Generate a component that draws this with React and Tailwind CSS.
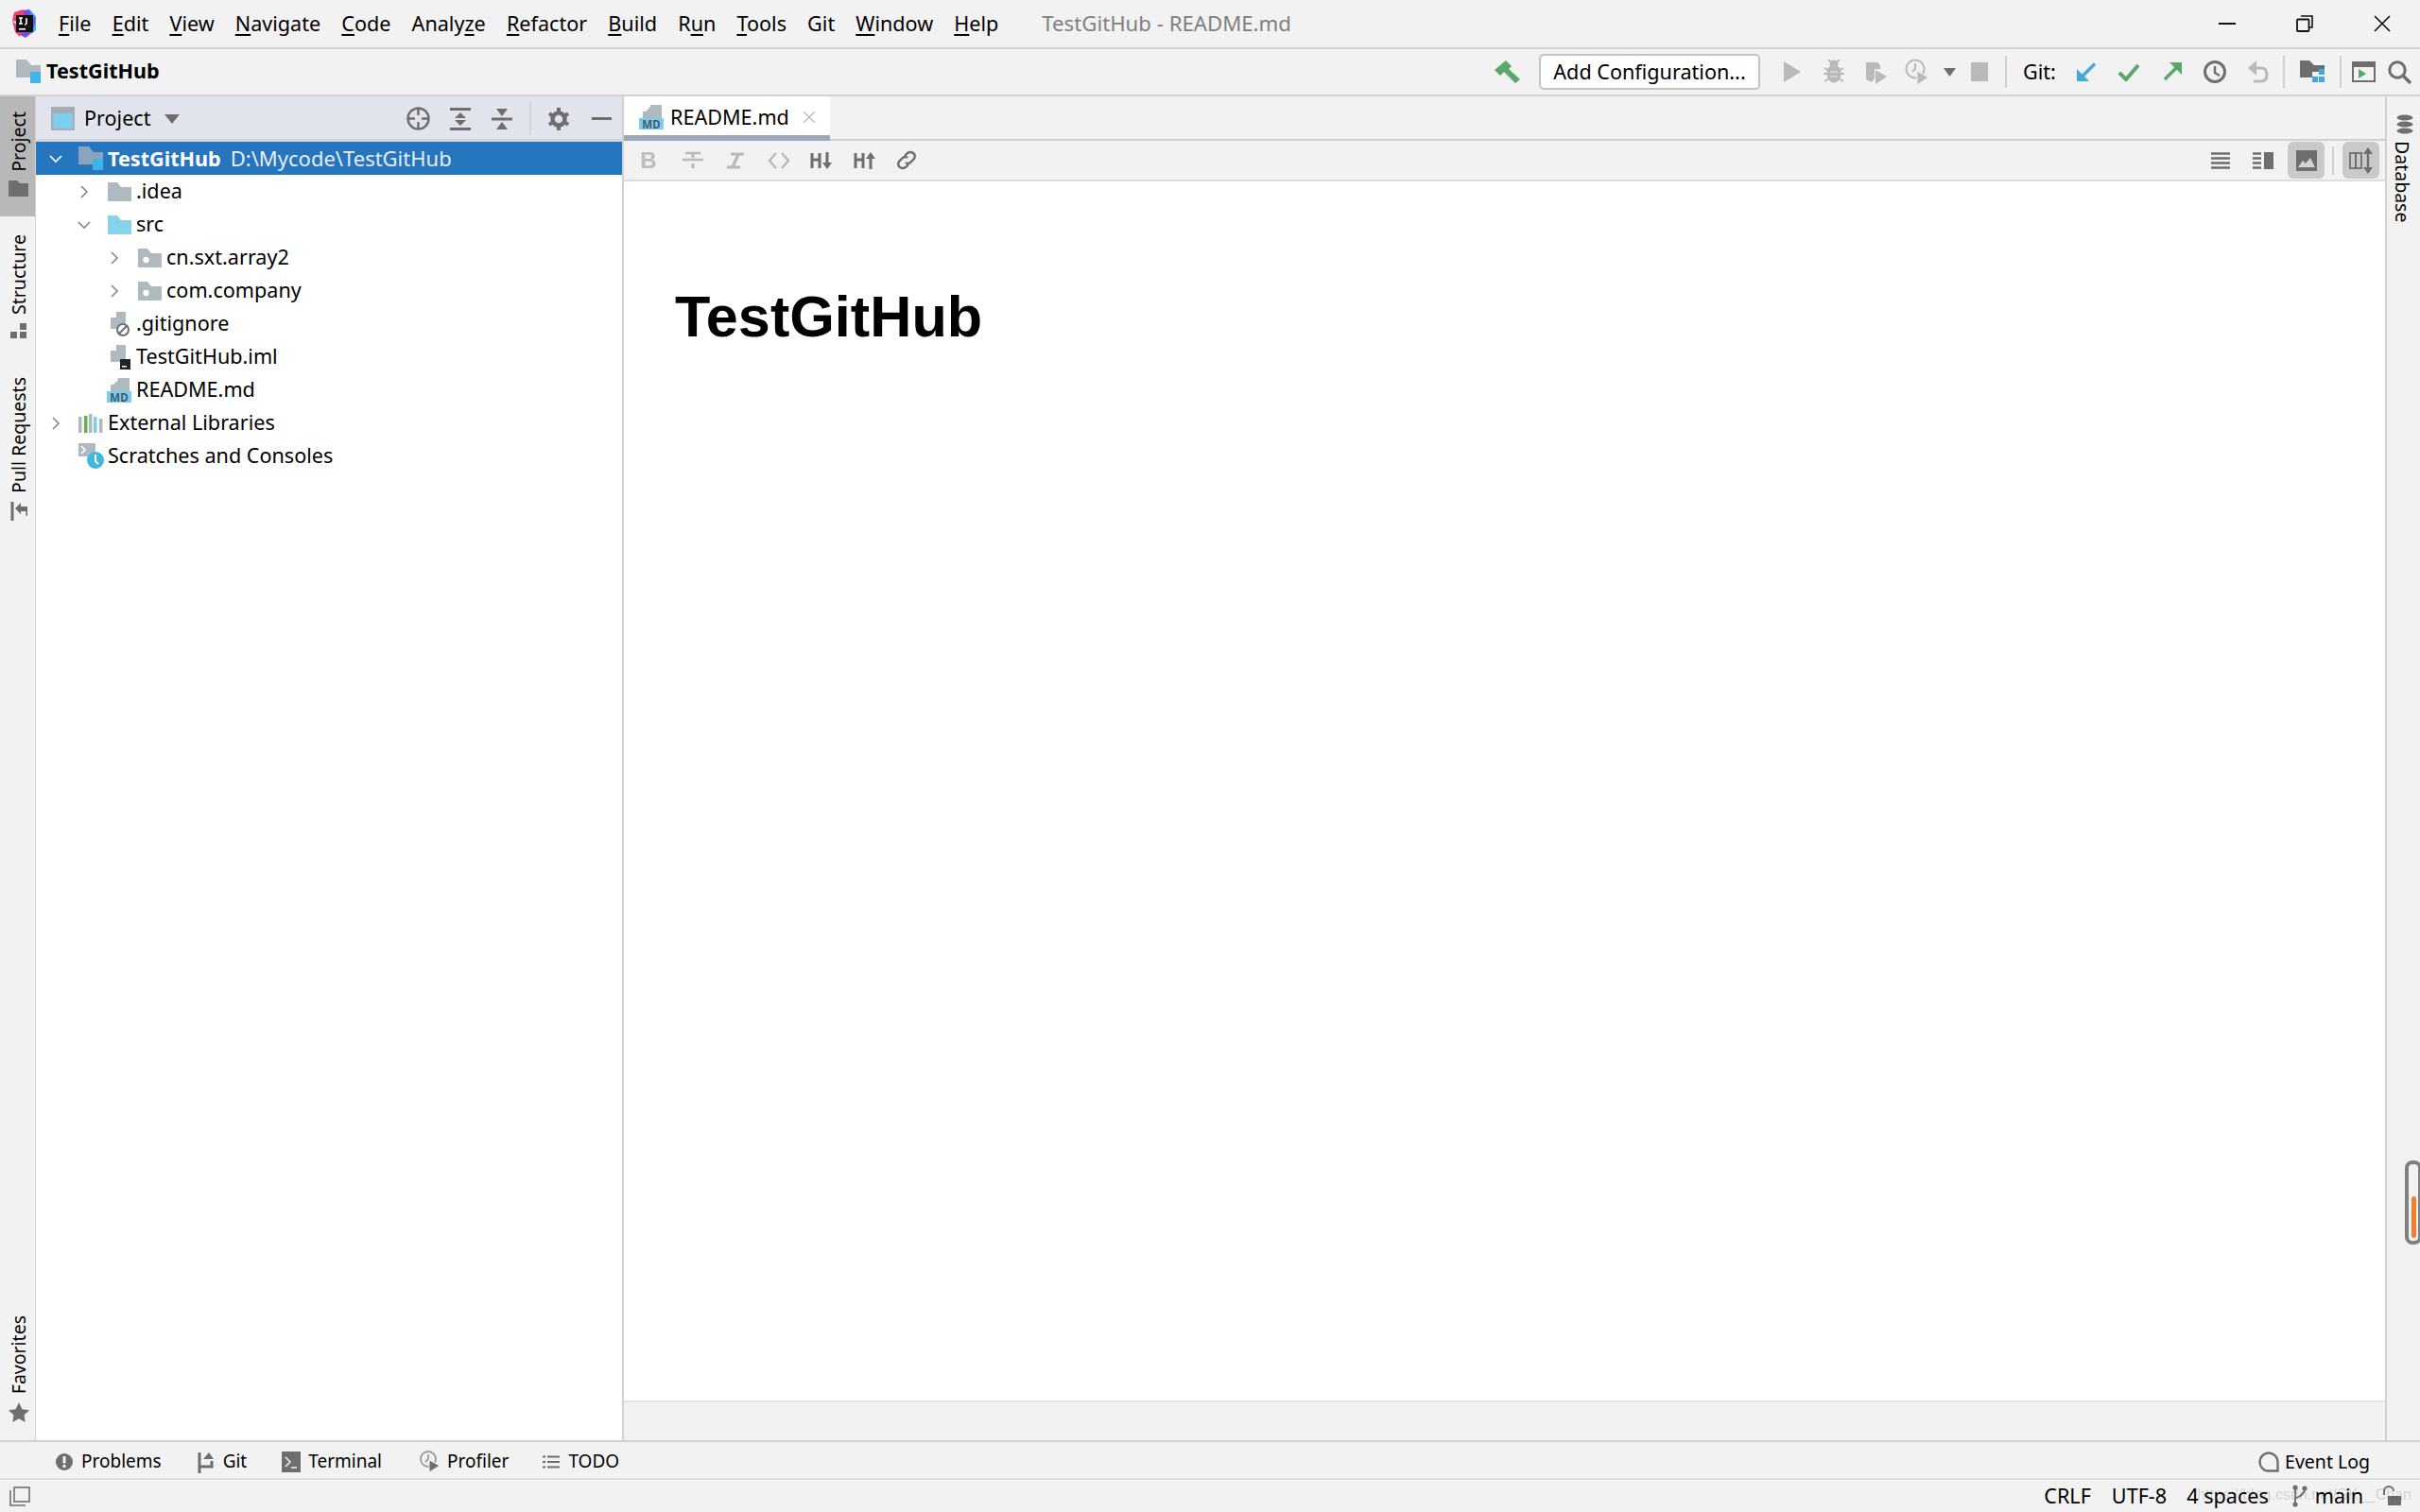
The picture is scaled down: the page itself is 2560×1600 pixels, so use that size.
import React from "react";

const G = "#6e6e6e";
const D = "#b9b9b9";
const BLUE = "#40a9e0";
const GREEN = "#59a869";

function Svg({ w, h, children, className = "" }) {
  return (
    <svg width={w} height={h} viewBox={`0 0 ${w} ${h}`} className={`shrink-0 ${className}`} fill="none">
      {children}
    </svg>
  );
}

function Logo() {
  return (
    <Svg w={28} h={30}>
      <path d="M7 2 L20 0 L27 8 L26 22 L16 30 L5 24 Z" fill="#7a4be0" />
      <path d="M4 3 L14 0 L14 14 L2 12 Z" fill="#f0416c" />
      <path d="M5 24 L2 12 L12 22 L10 29 Z" fill="#ef3f8c" />
      <path d="M20 0 L27 8 L22 14 Z" fill="#3b8fe8" />
      <path d="M22 26 L27 12 L27 22 Z" fill="#3bb6e8" />
      <rect x="6" y="6" width="18" height="18" fill="#111" />
      <path d="M9 9h4M11 9v6M9 15h4M17 9v5q0 2-2 2" stroke="#fff" strokeWidth="1.6" />
      <rect x="9" y="20" width="7" height="1.6" fill="#fff" />
    </Svg>
  );
}

function ModuleFolder({ folder = "#aeb9c0", w = 26 }) {
  return (
    <Svg w={w} h={25}>
      <path d="M0 0h11l5 6h10v13H0z" fill={folder} />
      <rect x="15" y="13" width="11" height="12" fill="#3fb4e6" />
    </Svg>
  );
}

function Folder({ color = "#aeb9c0", dot = false }) {
  return (
    <Svg w={25} h={20}>
      <path d="M0 0h10l4 5h11v15H0z" fill={color} />
      {dot && <circle cx="8.5" cy="12" r="3.2" fill="#fff" />}
    </Svg>
  );
}

function Page({ children }) {
  return (
    <Svg w={26} h={27} className="ml-[4px]">
      <path d="M8 0h10v18H2V6z" fill="#aeb9c0" transform="translate(0 1)" />
      <path d="M8 1v6H2z" fill="#fff" />
      {children}
    </Svg>
  );
}

function GitIgnoreIcon() {
  return (
    <Page>
      <circle cx="15" cy="20" r="6" fill="#fff" stroke={G} strokeWidth="2" />
      <path d="M11 24l8-8" stroke={G} strokeWidth="2" />
    </Page>
  );
}

function ImlIcon() {
  return (
    <Page>
      <rect x="12" y="16" width="11" height="11" fill="#222" />
      <rect x="14" y="23" width="5" height="1.5" fill="#fff" />
    </Page>
  );
}

function MdIcon() {
  return (
    <Svg w={26} h={26}>
      <path d="M12 0h12v15H4V7z" fill="#aeb9c0" />
      <path d="M12 0v7H4z" fill="#fff" />
      <path d="M13 1l-8 8h8z" fill="#aeb9c0" />
      <rect x="0" y="14" width="26" height="12" fill="#7ccdee" />
      <text x="13" y="24.500" textAnchor="middle" fontSize="11.500" fontWeight="700" fill="#3d5d70" fontFamily="Noto Sans, sans-serif">MD</text>
    </Svg>
  );
}

function LibIcon() {
  return (
    <Svg w={26} h={20}>
      <rect x="0" y="3" width="3.5" height="17" fill="#aeb9c0" />
      <rect x="6" y="2" width="3.5" height="18" fill="#62b543" />
      <rect x="11" y="0" width="3.5" height="20" fill="#aeb9c0" />
      <rect x="16" y="3" width="3.5" height="17" fill="#7ccdee" />
      <rect x="22" y="5" width="3.5" height="15" fill="#aeb9c0" />
    </Svg>
  );
}

function ScratchIcon() {
  return (
    <Svg w={27} h={27}>
      <rect x="0" y="0" width="18" height="14" fill="#aeb9c0" />
      <path d="M3 3l4 4-4 4" stroke="#fff" strokeWidth="1.6" />
      <circle cx="18" cy="18" r="9" fill="#40b6e0" />
      <path d="M18 12v7l3 3" stroke="#fff" strokeWidth="2" />
    </Svg>
  );
}

function Chevron({ open, color = "#8a8a8a" }) {
  return (
    <Svg w={16} h={16}>
      {open ? (
        <path d="M2 5l6 6 6-6" stroke={color} strokeWidth="1.7" />
      ) : (
        <path d="M5 2l6 6-6 6" stroke={color} strokeWidth="1.7" />
      )}
    </Svg>
  );
}

function Row({ pl, chevron, icon, selected, children }) {
  return (
    <div className={`h-[35px] flex items-center ${pl} ${selected ? "bg-[#2675bf] text-white" : "text-black"}`}>
      <div className="w-6 flex justify-center items-center">
        {chevron && <Chevron open={chevron === "open"} color={selected ? "#ffffff" : "#8a8a8a"} />}
      </div>
      <div className="w-[28px] ml-[11px] flex justify-center items-center">{icon}</div>
      <div className="ml-[4px] whitespace-nowrap">{children}</div>
    </div>
  );
}

function SideTab({ label, icon, active, className = "" }) {
  return (
    <div className={`w-[37px] pl-[2px] flex flex-col items-center ${active ? "bg-[#b8b8b8]" : ""} ${className}`}>
      <span className="[writing-mode:vertical-rl] rotate-180 text-[19.5px] leading-[24px] text-black whitespace-nowrap">{label}</span>
      <div className="mt-[9px] flex justify-center">{icon}</div>
    </div>
  );
}

function BarTool({ icon, label, className = "" }) {
  return (
    <div className={`flex items-center ${className}`}>
      <div className="w-[24px] flex justify-center">{icon}</div>
      <span className="ml-[6px] whitespace-nowrap">{label}</span>
    </div>
  );
}

function Mn({ pre = "", u, post = "" }) {
  return (
    <span className="whitespace-nowrap">
      {pre}
      <span className="underline underline-offset-[3px]">{u}</span>
      {post}
    </span>
  );
}

export default function App() {
  return (
    <div className="relative w-[2560px] h-[1600px] overflow-hidden flex flex-col bg-[#f2f2f2] text-black text-[21.6px] font-['Noto_Sans','Open_Sans',sans-serif]">
      {/* Title bar */}
      <div className="h-[50px] shrink-0 flex items-center">
        <div className="ml-[11px] w-[51px]">
          <Logo />
        </div>
        <div className="flex items-center gap-[22.1px]">
          <Mn u="F" post="ile" />
          <Mn u="E" post="dit" />
          <Mn u="V" post="iew" />
          <Mn u="N" post="avigate" />
          <Mn u="C" post="ode" />
          <Mn pre="Analy" u="z" post="e" />
          <Mn u="R" post="efactor" />
          <Mn u="B" post="uild" />
          <Mn pre="R" u="u" post="n" />
          <Mn u="T" post="ools" />
          <span>Git</span>
          <Mn u="W" post="indow" />
          <Mn u="H" post="elp" />
        </div>
        <span className="ml-[46px] text-[22.2px] text-[#808080] whitespace-nowrap">TestGitHub - README.md</span>
        <div className="ml-auto flex items-center">
          <div className="w-[82px] flex justify-center">
            <Svg w={18} h={2}><rect width="18" height="2" fill="#111" /></Svg>
          </div>
          <div className="w-[82px] flex justify-center">
            <Svg w={18} h={18}>
              <path d="M5 1h12v12h-3" stroke="#111" strokeWidth="1.6" />
              <rect x="1" y="4.5" width="12.5" height="12.5" stroke="#111" strokeWidth="1.8" rx="1" />
            </Svg>
          </div>
          <div className="w-[81px] flex justify-center">
            <Svg w={18} h={18}><path d="M1 1l16 16M17 1L1 17" stroke="#111" strokeWidth="1.7" /></Svg>
          </div>
        </div>
      </div>

      {/* Navigation bar */}
      <div className="h-[52px] shrink-0 flex items-center border-y-2 border-[#d1d1d1]">
        <div className="ml-[17px] flex items-center">
          <ModuleFolder w={26} />
          <span className="ml-[6px] mb-[2px] font-bold">TestGitHub</span>
        </div>
        <div className="ml-auto flex items-center h-full">
          <div className="w-[34px] flex justify-center">
            <Svg w={27} h={24}>
              <path d="M0 10L12 0l6 6-3 3 12 11-5 4L10 12l-4 4z" fill={GREEN} />
            </Svg>
          </div>
          <div className="ml-[17px] w-[234px] h-[38px] flex items-center justify-center rounded-[5px] bg-white border-2 border-[#c4c4c4]">
            Add Configuration...
          </div>
          <div className="ml-[12px] w-[44px] flex justify-center">
            <Svg w={18} h={22}><path d="M0 0l18 11L0 22z" fill={D} /></Svg>
          </div>
          <div className="w-[44px] flex justify-center">
            <Svg w={22} h={26}>
              <ellipse cx="11" cy="15" rx="7.500" ry="9.500" fill={D} />
              <circle cx="11" cy="5" r="4.5" fill={D} />
              <path d="M1 9l5 3M21 9l-5 3M0 15h5M22 15h-5M1 23l5-3M21 23l-5-3M5 0l3 3M17 0l-3 3" stroke={D} strokeWidth="2" />
              <path d="M7 13h8M7 18h8" stroke="#f2f2f2" strokeWidth="1.200" />
            </Svg>
          </div>
          <div className="w-[44px] flex justify-center">
            <Svg w={26} h={26}>
              <path d="M3 3h12l3 3v4l-6 0v10l-3 4-6-3z" fill={D} />
              <path d="M13 11l12 7-12 8z" fill={D} />
            </Svg>
          </div>
          <div className="w-[44px] flex justify-center">
            <Svg w={26} h={28}>
              <circle cx="11" cy="11" r="9.5" stroke={D} strokeWidth="2" />
              <path d="M11 5v6l-3 3" stroke={D} strokeWidth="2" />
              <path d="M13 13l12 7-12 8z" fill={D} stroke="#f2f2f2" strokeWidth="1" />
            </Svg>
          </div>
          <div className="w-6 flex justify-center">
            <Svg w={13} h={9}><path d="M0 0h13L6.500 9z" fill={G} /></Svg>
          </div>
          <div className="w-[40px] flex justify-center">
            <Svg w={18} h={20}><rect width="18" height="20" fill={D} /></Svg>
          </div>
          <div className="ml-[7px] w-[2px] h-[34px] bg-[#d1d1d1]" />
          <div className="ml-[17px] w-[45px]">Git:</div>
          <div className="w-[44px] flex justify-center">
            <Svg w={20} h={20}>
              <path d="M19 1.500L5 15.500" stroke={BLUE} strokeWidth="3.6" />
              <path d="M0 7v13h13z" fill={BLUE} />
            </Svg>
          </div>
          <div className="w-[46px] flex justify-center">
            <Svg w={24} h={20}><path d="M2 11l7 7L22 3" stroke={GREEN} strokeWidth="4" /></Svg>
          </div>
          <div className="w-[46px] flex justify-center">
            <Svg w={20} h={20}>
              <path d="M2 18L15 5" stroke={GREEN} strokeWidth="3.6" />
              <path d="M7 0h13v13z" fill={GREEN} />
            </Svg>
          </div>
          <div className="w-[44px] flex justify-center">
            <Svg w={24} h={24}>
              <circle cx="12" cy="12" r="10.500" stroke={G} strokeWidth="3" />
              <path d="M12 6v7l5 3" stroke={G} strokeWidth="2.4" />
            </Svg>
          </div>
          <div className="w-[48px] flex justify-center">
            <Svg w={22} h={24}>
              <path d="M3 8h11q6 0 6 7t-6 7H6" stroke={D} strokeWidth="3.2" />
              <path d="M9 0v16L0 8z" fill={D} />
            </Svg>
          </div>
          <div className="ml-[2px] w-[2px] h-[34px] bg-[#d1d1d1]" />
          <div className="w-[58px] flex justify-center">
            <Svg w={26} h={24}>
              <path d="M0 0h10l5 5h11v13H0z" fill={G} />
              <rect x="13" y="12" width="13" height="12" fill="#f2f2f2" />
              <rect x="20" y="9" width="6" height="6" fill={BLUE} />
              <rect x="13" y="17" width="6" height="6" fill={BLUE} />
              <rect x="20" y="17" width="6" height="6" fill={BLUE} />
            </Svg>
          </div>
          <div className="w-[2px] h-[34px] bg-[#d1d1d1]" />
          <div className="w-[46px] flex justify-center">
            <Svg w={25} h={22}>
              <rect x="1" y="1" width="23" height="20" stroke={G} strokeWidth="2" />
              <rect x="1" y="1" width="23" height="5" fill={G} />
              <path d="M7 8l8 5-8 5z" fill={GREEN} />
            </Svg>
          </div>
          <div className="w-[30px] mr-[7px] flex justify-center">
            <Svg w={25} h={25}>
              <circle cx="10" cy="10" r="8.200" stroke={G} strokeWidth="3" />
              <path d="M16 16l8 8" stroke={G} strokeWidth="3.4" />
            </Svg>
          </div>
        </div>
      </div>

      {/* Main */}
      <div className="flex-1 min-h-0 flex">
        {/* Left strip */}
        <div className="w-[38px] shrink-0 border-r border-[#d1d1d1] flex flex-col justify-between">
          <div className="flex flex-col">
            <SideTab
              active
              className="h-[127px] pt-[16px]"
              label="Project"
              icon={<Svg w={21} h={17}><path d="M0 0h9l3 3h9v14H0z" fill={G} /></Svg>}
            />
            <SideTab
              className="mt-[19px]"
              label="Structure"
              icon={
                <Svg w={18} h={17}>
                  <rect x="10" y="0" width="7" height="7" fill={G} />
                  <rect x="0" y="9" width="7" height="7" fill={G} />
                  <rect x="10" y="9" width="7" height="7" fill={G} />
                </Svg>
              }
            />
            <SideTab
              className="mt-[40px]"
              label="Pull Requests"
              icon={
                <Svg w={18} h={20}>
                  <path d="M2 0v20M18 8v7" stroke={G} strokeWidth="3" />
                  <path d="M5 7l6-6v4h7v5h-7v3z" fill={G} />
                </Svg>
              }
            />
          </div>
          <SideTab
            className="mb-[19px]"
            label="Favorites"
            icon={<Svg w={22} h={21}><path d="M11 0l3.400 7.200 7.600 1-5.600 5.300 1.400 7.500L11 17.300 4.200 21l1.400-7.500L0 8.200l7.600-1z" fill={G} /></Svg>}
          />
        </div>

        {/* Project panel */}
        <div className="w-[622px] shrink-0 border-r-2 border-[#d1d1d1] bg-white flex flex-col">
          <div className="h-[48px] shrink-0 bg-[#e1e4ec] border-b-[3px] border-[#d1d4da] flex items-center pt-[2px]">
            <div className="ml-[16px]">
              <Svg w={25} h={25}>
                <rect x="1" y="1" width="23" height="23" fill="#7ccdee" stroke="#a3aeb6" strokeWidth="2.400" />
                <rect x="1" y="1" width="23" height="6" fill="#a3aeb6" />
              </Svg>
            </div>
            <span className="ml-[10px]">Project</span>
            <div className="ml-[14px]">
              <Svg w={16} h={10}><path d="M0 0h16L8 10z" fill={G} /></Svg>
            </div>
            <div className="ml-[240px] w-[25px] flex justify-center">
              <Svg w={25} h={25}>
                <circle cx="12.500" cy="12.500" r="11" stroke={G} strokeWidth="2.400" />
                <path d="M12.500 1v8M12.500 16v8M1 12.500h8M16 12.500h8" stroke={G} strokeWidth="2.400" />
              </Svg>
            </div>
            <div className="ml-[21px] w-[22px] flex justify-center">
              <Svg w={22} h={24}>
                <rect width="22" height="3" fill={G} />
                <rect y="21" width="22" height="3" fill={G} />
                <path d="M11 5l6 6H5zM11 19l6-6H5z" fill={G} />
              </Svg>
            </div>
            <div className="ml-[22px] w-[22px] flex justify-center">
              <Svg w={22} h={24}>
                <rect y="10.500" width="22" height="3" fill={G} />
                <path d="M11 9L5 1h12zM11 15l6 8H5z" fill={G} />
              </Svg>
            </div>
            <div className="ml-[18px] w-[2px] h-[35px] bg-[#d1d4da]" />
            <div className="ml-[18px] w-[22px] flex justify-center">
              <Svg w={22} h={24}>
                <circle cx="11" cy="12" r="6.500" stroke={G} strokeWidth="4.500" />
                <path d="M11 0v5M11 19v5M1 6l4 3M21 6l-4 3M1 18l4-3M21 18l-4-3" stroke={G} strokeWidth="4" />
              </Svg>
            </div>
            <div className="ml-[24px]">
              <Svg w={21} h={3}><rect width="21" height="3" fill={G} /></Svg>
            </div>
          </div>
          <div className="flex flex-col">
            <Row
              pl="pl-[9px]"
              chevron="open"
              selected
              icon={<ModuleFolder folder="#8ba3bb" />}
            >
              <span className="font-bold">TestGitHub</span>
              <span className="ml-[10px] text-[22px] text-[#e6eef6]">D:\Mycode\TestGitHub</span>
            </Row>
            <Row pl="pl-[39px]" chevron="closed" icon={<Folder />}>.idea</Row>
            <Row pl="pl-[39px]" chevron="open" icon={<Folder color="#87d3ec" />}>src</Row>
            <Row pl="pl-[71px]" chevron="closed" icon={<Folder dot />}>cn.sxt.array2</Row>
            <Row pl="pl-[71px]" chevron="closed" icon={<Folder dot />}>com.company</Row>
            <Row pl="pl-[39px]" icon={<GitIgnoreIcon />}>.gitignore</Row>
            <Row pl="pl-[39px]" icon={<ImlIcon />}>TestGitHub.iml</Row>
            <Row pl="pl-[39px]" icon={<MdIcon />}>README.md</Row>
            <Row pl="pl-[9px]" chevron="closed" icon={<LibIcon />}>External Libraries</Row>
            <Row pl="pl-[9px]" icon={<ScratchIcon />}>Scratches and Consoles</Row>
          </div>
        </div>

        {/* Editor */}
        <div className="flex-1 min-w-0 flex flex-col">
          <div className="h-[47px] shrink-0 flex border-b-2 border-[#d1d1d1]">
            <div className="w-[218px] h-[47px] pt-[3px] bg-white border-b-[6px] border-[#9ca7b8] flex items-center">
              <div className="ml-[16px]"><MdIcon /></div>
              <span className="ml-[7px]">README.md</span>
              <div className="ml-[14px]">
                <Svg w={14} h={14}><path d="M1 1l12 12M13 1L1 13" stroke="#c4c4c4" strokeWidth="1.600" /></Svg>
              </div>
            </div>
          </div>
          <div className="h-[43px] shrink-0 flex items-center border-b-2 border-[#dedede]">
            <div className="ml-[16px] w-[20px] flex justify-center">
              <span className="font-['Liberation_Sans',sans-serif] font-bold text-[#bdbdbd] text-[24px] leading-none">B</span>
            </div>
            <div className="ml-[26px] w-[22px] flex justify-center">
              <Svg w={22} h={19}>
                <path d="M3 2h16M0 9h22" stroke={D} strokeWidth="2.400" />
                <path d="M11 2v5" stroke={D} strokeWidth="3" />
                <rect x="9.500" y="13" width="3" height="5" fill={D} />
              </Svg>
            </div>
            <div className="ml-[25px] w-[18px] flex justify-center">
              <Svg w={18} h={18}>
                <path d="M4 2h14M0 16h14" stroke={D} strokeWidth="3" />
                <path d="M12 2L6 16" stroke={D} strokeWidth="3.200" />
              </Svg>
            </div>
            <div className="ml-[25px] w-[24px] flex justify-center">
              <Svg w={24} h={18}><path d="M9 1L2 9l7 8M15 1l7 8-7 8" stroke={D} strokeWidth="2.400" /></Svg>
            </div>
            <div className="ml-[21px] w-[24px] flex justify-center">
              <Svg w={24} h={18}>
                <path d="M2 1v16M10 1v16M2 8h8" stroke={G} strokeWidth="3" />
                <path d="M18 0v13" stroke={G} strokeWidth="3" />
                <path d="M13 11h10l-5 7z" fill={G} />
              </Svg>
            </div>
            <div className="ml-[22px] w-[24px] flex justify-center">
              <Svg w={24} h={18}>
                <path d="M2 1v16M10 1v16M2 8h8" stroke={G} strokeWidth="3" />
                <path d="M18 5v13" stroke={G} strokeWidth="3" />
                <path d="M13 7h10L18 0z" fill={G} />
              </Svg>
            </div>
            <div className="ml-[21px] w-[22px] flex justify-center">
              <Svg w={22} h={21}>
                <path d="M9 6l3-3q3-2 6 0t1 6l-4 4q-3 2-5 0" stroke={G} strokeWidth="2.400" />
                <path d="M13 15l-3 3q-3 2-6 0t-1-6l4-4q3-2 5 0" stroke={G} strokeWidth="2.400" />
              </Svg>
            </div>
            <div className="ml-auto flex items-center">
              <Svg w={20} h={18}>
                <path d="M0 1.500h20M0 6.500h20M0 11.500h20M0 16.500h20" stroke={G} strokeWidth="2.400" />
              </Svg>
              <div className="ml-[24px]">
                <Svg w={22} h={18}>
                  <path d="M0 1.500h9M0 6.500h9M0 11.500h9M0 16.500h9" stroke={G} strokeWidth="2.400" />
                  <rect x="12" y="0" width="10" height="18" fill={G} />
                </Svg>
              </div>
              <div className="ml-[15px] w-[39px] h-[39px] rounded-[6px] bg-[#c9c9c9] flex items-center justify-center">
                <Svg w={22} h={22}>
                  <rect width="22" height="22" fill={G} />
                  <path d="M2 18l5-7 3 3 5-6 5 10z" fill="#d4d4d4" />
                </Svg>
              </div>
              <div className="ml-[8px] w-[2px] h-[30px] bg-[#d1d1d1]" />
              <div className="ml-[9px] mr-[6px] w-[39px] h-[39px] rounded-[6px] bg-[#c9c9c9] flex items-center justify-center">
                <Svg w={26} h={28}>
                  <rect x="1" y="6" width="6" height="16" stroke={G} strokeWidth="1.800" />
                  <rect x="7" y="6" width="6" height="16" stroke={G} strokeWidth="1.800" />
                  <path d="M20 4v20" stroke={G} strokeWidth="2.400" />
                  <path d="M15 7l5-7 5 7zM15 21l5 7 5-7z" fill={G} />
                </Svg>
              </div>
            </div>
          </div>
          <div className="flex-1 min-h-0 bg-white pl-[54px] pt-[107px]">
            <h1 className="font-['Liberation_Sans',Arial,sans-serif] font-bold text-[61.2px] leading-[72px] text-black">TestGitHub</h1>
          </div>
          <div className="h-[42px] shrink-0 border-t-2 border-[#e4e4e4]" />
        </div>

        {/* Right strip */}
        <div className="w-[37px] shrink-0 border-l-2 border-[#d1d1d1] flex flex-col items-start">
          <div className="mt-[19px] ml-[8px] flex flex-col items-center w-[22px]">
            <Svg w={20} h={21}>
              <ellipse cx="10" cy="3.500" rx="8.500" ry="3" fill={G} />
              <ellipse cx="10" cy="10.500" rx="8.500" ry="3" fill={G} />
              <ellipse cx="10" cy="17.500" rx="8.500" ry="3" fill={G} />
            </Svg>
            <span className="mt-[7px] mr-[6px] [writing-mode:vertical-rl] text-[19.5px] leading-[24px] whitespace-nowrap">Database</span>
          </div>
          <div className="mt-auto mb-[207px] ml-[19px] w-[18px] h-[89px] rounded-[8px] border-[4px] border-[#808080] bg-[#f2f2f2] flex flex-col justify-end items-center pb-[3px]">
            <div className="w-[5px] h-[44px] rounded-[3px] bg-[#f97b2d]" />
          </div>
        </div>
      </div>

      {/* Tool window bar */}
      <div className="h-[40px] shrink-0 border-t-2 border-[#d1d1d1] flex items-center text-[19px] leading-none pt-[3px]">
        <BarTool
          className="ml-[56px]"
          label="Problems"
          icon={
            <Svg w={18} h={20}>
              <circle cx="9" cy="10" r="9" fill={G} />
              <rect x="7.500" y="4" width="3" height="7.500" fill="#f2f2f2" />
              <rect x="7.500" y="13" width="3" height="3" fill="#f2f2f2" />
            </Svg>
          }
        />
        <BarTool
          className="ml-[35px]"
          label="Git"
          icon={
            <Svg w={18} h={24}>
              <path d="M2 2v22M15 11v6H3" stroke={G} strokeWidth="3" />
              <path d="M6 9l6-7 5 7z" fill={G} />
            </Svg>
          }
        />
        <BarTool
          className="ml-[35px]"
          label="Terminal"
          icon={
            <Svg w={20} h={22}>
              <rect width="20" height="22" fill={G} />
              <path d="M4 6l5 5-5 5" stroke="#f2f2f2" strokeWidth="1.500" />
              <path d="M10 17h6" stroke="#f2f2f2" strokeWidth="1.500" />
            </Svg>
          }
        />
        <BarTool
          className="ml-[39px]"
          label="Profiler"
          icon={
            <Svg w={22} h={24}>
              <circle cx="9" cy="9" r="8" stroke="#9a9a9a" strokeWidth="1.800" />
              <path d="M9 4v5l-3 3" stroke="#9a9a9a" strokeWidth="1.800" />
              <path d="M10 10l11 6-11 7z" fill={G} stroke="#f2f2f2" strokeWidth="1" />
            </Svg>
          }
        />
        <BarTool
          className="ml-[33px]"
          label="TODO"
          icon={
            <Svg w={18} h={14}>
              <path d="M0 1.500h3M5 1.500h13M0 7h3M5 7h13M0 12.500h3M5 12.500h13" stroke={G} strokeWidth="2.200" />
            </Svg>
          }
        />
        <div className="ml-auto mr-[53px] flex items-center">
          <Svg w={23} h={22}>
            <path d="M21.500 20.500H11a9.500 9.500 0 1 1 10.500-9.500z" stroke={G} strokeWidth="2.400" />
          </Svg>
          <span className="ml-[6px] text-[19.5px]">Event Log</span>
        </div>
      </div>

      {/* Status bar */}
      <div className="h-[36px] shrink-0 border-t-2 border-[#dcdcdc] flex items-center text-[21.6px] leading-none">
        <div className="ml-[10px]">
          <Svg w={22} h={21}>
            <rect x="5" y="1" width="16" height="15" stroke={G} strokeWidth="1.600" />
            <path d="M1 4v16h16" stroke={G} strokeWidth="1.600" />
          </Svg>
        </div>
        <div className="ml-auto flex items-center">
          <span>CRLF</span>
          <span className="ml-[22px]">UTF-8</span>
          <span className="ml-[21px]">4 spaces</span>
          <div className="ml-[24px]">
            <Svg w={18} h={24}>
              <circle cx="4" cy="3" r="2.600" fill={G} />
              <circle cx="4" cy="21" r="2.600" fill={G} />
              <circle cx="14" cy="4" r="2.600" fill={G} />
              <path d="M4 3v18M14 4q0 7-9 10" stroke={G} strokeWidth="1.800" />
            </Svg>
          </div>
          <span className="ml-[7px]">main</span>
          <div className="ml-[20px] mr-[20px]">
            <Svg w={20} h={22}>
              <path d="M2 10V6a5 5 0 0 1 10 0" stroke={G} strokeWidth="2" />
              <rect x="6" y="11" width="14" height="10" fill={G} />
            </Svg>
          </div>
        </div>
      </div>

      {/* Watermark over the status bar */}
      <div className="absolute right-[9px] bottom-[10px] text-[16px] leading-none text-black/15 font-['Liberation_Sans',sans-serif] whitespace-nowrap pointer-events-none">
        https://blog.csdn.net/GK__Chan
      </div>
    </div>
  );
}
